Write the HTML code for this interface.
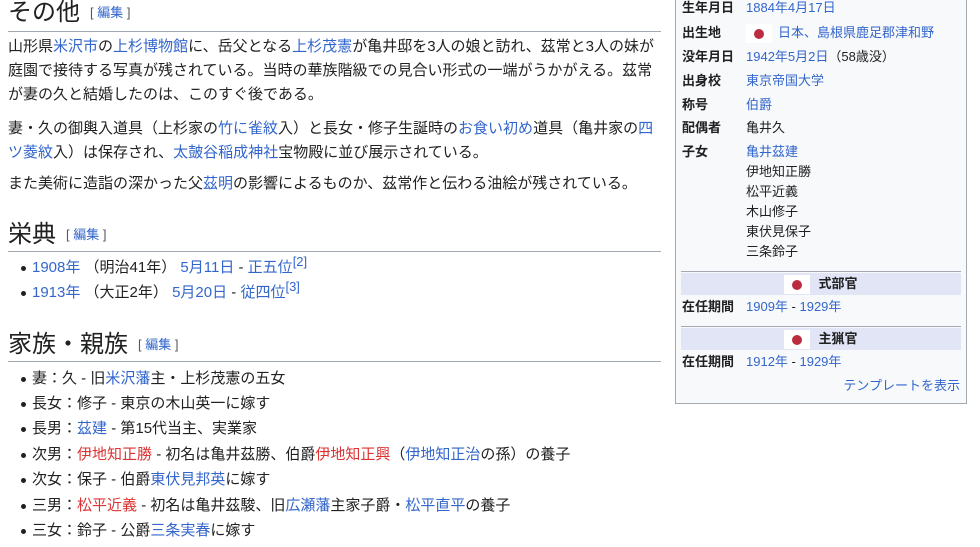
<!DOCTYPE html>
<html><head><meta charset="utf-8"><style>
*{margin:0;padding:0;box-sizing:border-box}
body{width:980px;height:547px;overflow:hidden;background:#fff;font-family:"Liberation Sans","Noto Sans CJK JP",sans-serif;color:#202122;position:relative}
.a{position:absolute;white-space:nowrap}
.t{font-size:15px;line-height:20px}
a,.b{color:#3366cc;text-decoration:none}
.r{color:#d33}
h2{position:absolute;left:8px;font-weight:normal;font-size:24px;line-height:30px;white-space:nowrap}
h2 .e{font-size:13px;color:#54595d;margin-left:10px;vertical-align:3px}
.hr{position:absolute;left:8px;width:653px;height:1px;background:#a2a9b1}
.li{position:absolute;left:32px;font-size:15px;line-height:20px;white-space:nowrap}
.li:before{content:"";position:absolute;left:-11px;top:8px;width:5px;height:5px;border-radius:50%;background:#202122}
sup{font-size:13px;vertical-align:6px;line-height:0}
#ib{position:absolute;left:675px;top:-5px;width:292px;height:409px;background:#f8f9fa;border:1px solid #a2a9b1}
.l{position:absolute;left:682px;font-size:13px;font-weight:bold;line-height:18px}
.v{position:absolute;left:746px;font-size:13px;line-height:18px;white-space:nowrap}
.flag{display:inline-block;width:26px;height:19px;background:#fff;position:relative;vertical-align:middle;margin-right:6px}
.flag:after{content:"";position:absolute;left:8px;top:5px;width:10px;height:10px;border-radius:50%;background:#bc2c3f}
.hd{position:absolute;left:681px;width:280px;height:22px;background:#e2e5f6;font-size:13px;font-weight:bold;text-align:center;line-height:22px}
.sep{position:absolute;left:681px;width:280px;height:1px;background:#a2a9b1}
</style></head><body>
<h2 style="top:-2px">その他<span class="e">[ <a>編集</a> ]</span></h2>
<div class="hr" style="top:31px"></div>
<div class="a t" style="left:8px;top:37px">山形県<a>米沢市</a>の<a>上杉博物館</a>に、岳父となる<a>上杉茂憲</a>が亀井邸を3人の娘と訪れ、茲常と3人の妹が</div>
<div class="a t" style="left:8px;top:61px">庭園で接待する写真が残されている。当時の華族階級での見合い形式の一端がうかがえる。茲常</div>
<div class="a t" style="left:8px;top:85px">が妻の久と結婚したのは、このすぐ後である。</div>
<div class="a t" style="left:8px;top:119px">妻・久の御輿入道具（上杉家の<a>竹に雀紋</a>入）と長女・修子生誕時の<a>お食い初め</a>道具（亀井家の<a>四</a></div>
<div class="a t" style="left:8px;top:143px"><a>ツ菱紋</a>入）は保存され、<a>太皷谷稲成神社</a>宝物殿に並び展示されている。</div>
<div class="a t" style="left:8px;top:174px">また美術に造詣の深かった父<a>茲明</a>の影響によるものか、茲常作と伝わる油絵が残されている。</div>

<h2 style="top:220px">栄典<span class="e">[ <a>編集</a> ]</span></h2>
<div class="hr" style="top:251px"></div>
<div class="li" style="top:258px"><a>1908年</a> （明治41年） <a>5月11日</a> - <a>正五位</a><sup><a>[2]</a></sup></div>
<div class="li" style="top:283px"><a>1913年</a> （大正2年） <a>5月20日</a> - <a>従四位</a><sup><a>[3]</a></sup></div>

<h2 style="top:330px">家族・親族<span class="e">[ <a>編集</a> ]</span></h2>
<div class="hr" style="top:361px"></div>
<div class="li" style="top:369px">妻：久 - 旧<a>米沢藩</a>主・上杉茂憲の五女</div>
<div class="li" style="top:394px">長女：修子 - 東京の木山英一に嫁す</div>
<div class="li" style="top:419px">長男：<a>茲建</a> - 第15代当主、実業家</div>
<div class="li" style="top:445px">次男：<span class="r">伊地知正勝</span> - 初名は亀井茲勝、伯爵<span class="r">伊地知正興</span>（<a>伊地知正治</a>の孫）の養子</div>
<div class="li" style="top:470px">次女：保子 - 伯爵<a>東伏見邦英</a>に嫁す</div>
<div class="li" style="top:496px">三男：<span class="r">松平近義</span> - 初名は亀井茲駿、旧<a>広瀬藩</a>主家子爵・<a>松平直平</a>の養子</div>
<div class="li" style="top:521px">三女：鈴子 - 公爵<a>三条実春</a>に嫁す</div>

<div id="ib"></div>
<div class="l" style="top:-1px">生年月日</div><div class="v b" style="top:-1px">1884年4月17日</div>
<div class="l" style="top:24px">出生地</div><div class="v" style="top:24px"><span class="flag"></span><a>日本、島根県鹿足郡津和野</a></div>
<div class="l" style="top:48px">没年月日</div><div class="v" style="top:48px"><a>1942年5月2日</a>（58歳没）</div>
<div class="l" style="top:72px">出身校</div><div class="v b" style="top:72px">東京帝国大学</div>
<div class="l" style="top:96px">称号</div><div class="v b" style="top:96px">伯爵</div>
<div class="l" style="top:119px">配偶者</div><div class="v" style="top:119px">亀井久</div>
<div class="l" style="top:143px">子女</div><div class="v b" style="top:143px">亀井茲建</div>
<div class="v" style="top:163px">伊地知正勝</div>
<div class="v" style="top:183px">松平近義</div>
<div class="v" style="top:203px">木山修子</div>
<div class="v" style="top:223px">東伏見保子</div>
<div class="v" style="top:243px">三条鈴子</div>
<div class="sep" style="top:271px"></div>
<div class="hd" style="top:273px"><span class="flag" style="margin-right:8px"></span>式部官</div>
<div class="l" style="top:298px">在任期間</div><div class="v" style="top:298px"><a>1909年</a> - <a>1929年</a></div>
<div class="sep" style="top:326px"></div>
<div class="hd" style="top:328px"><span class="flag" style="margin-right:8px"></span>主猟官</div>
<div class="l" style="top:353px">在任期間</div><div class="v" style="top:353px"><a>1912年</a> - <a>1929年</a></div>
<div class="a b" style="right:20px;top:377px;font-size:13px;line-height:18px;text-align:right">テンプレートを表示</div>
</body></html>
